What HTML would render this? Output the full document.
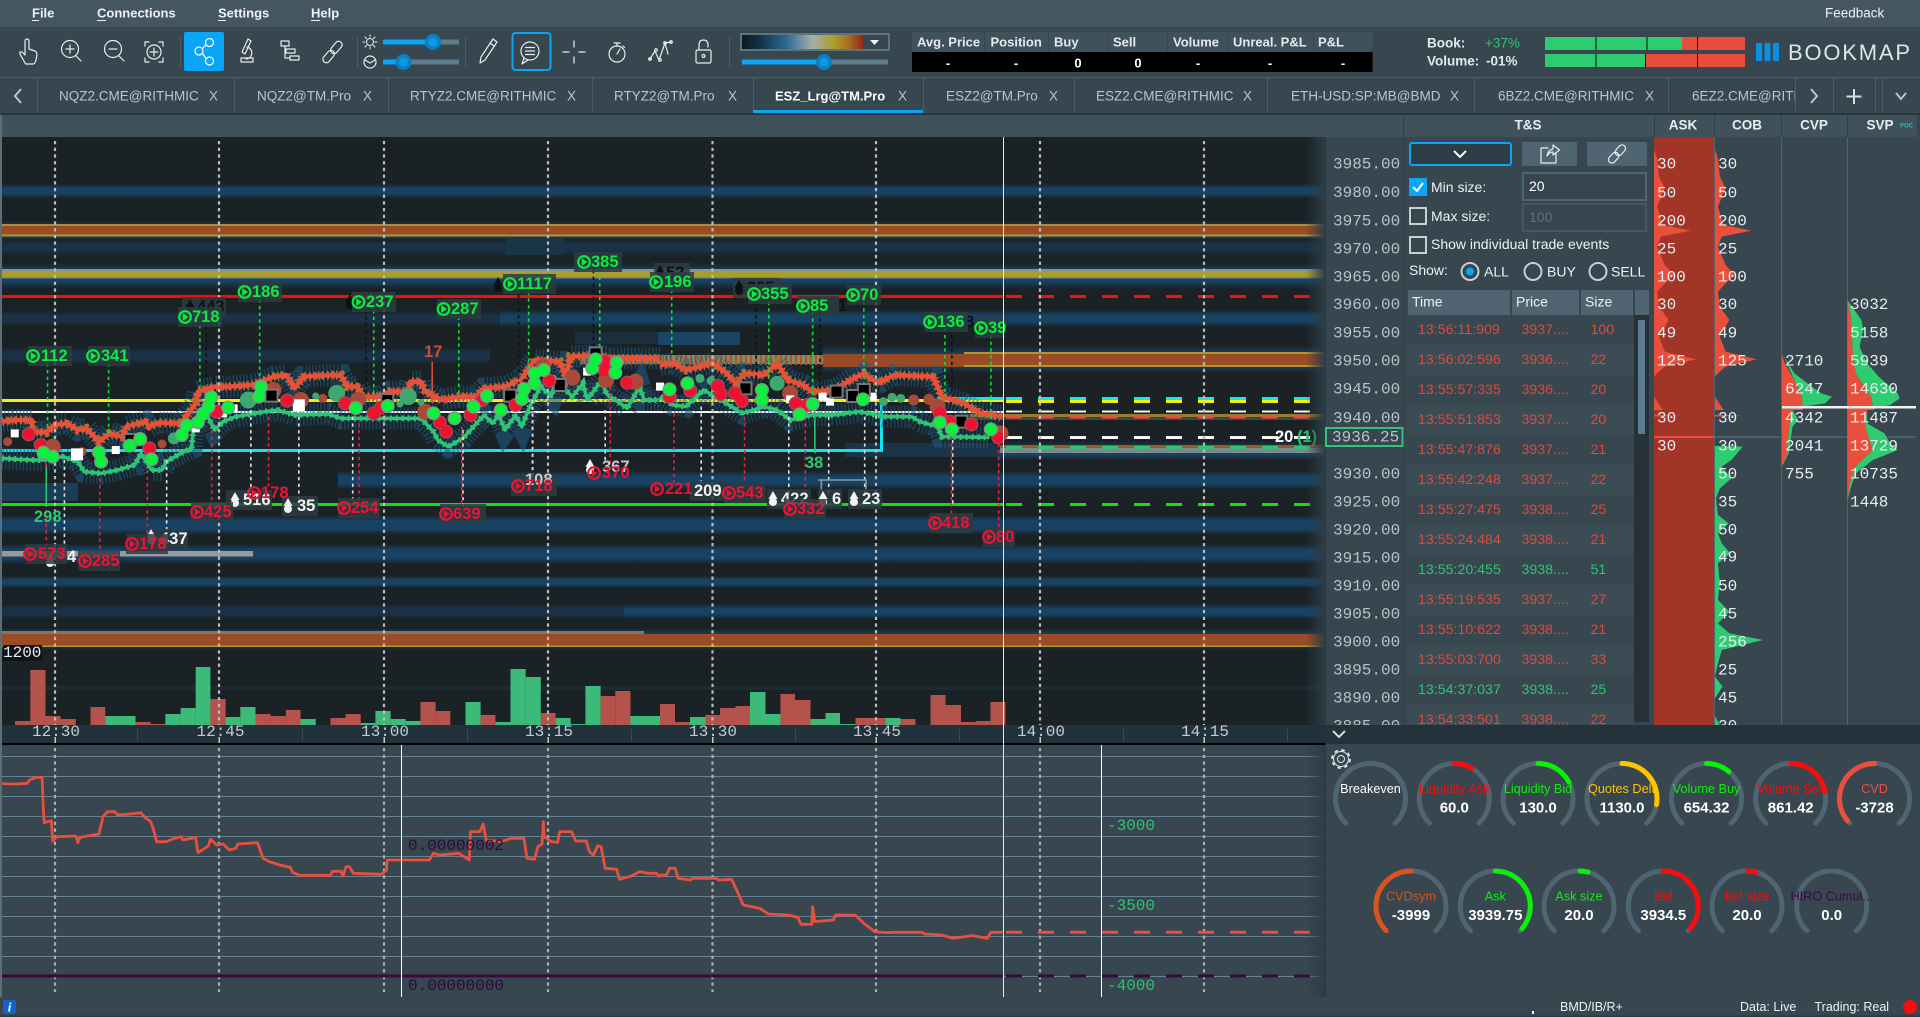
<!DOCTYPE html>
<html lang="en"><head><meta charset="utf-8"><title>Bookmap</title>
<style>
html,body{margin:0;padding:0;background:#37464f;width:1920px;height:1017px;overflow:hidden}
svg{display:block;font-family:"Liberation Sans",sans-serif}
text{dominant-baseline:central}
.m{font-family:"Liberation Mono",monospace;font-size:16px}
.ns{vector-effect:non-scaling-stroke;fill:none}
.ic{fill:none;stroke:#e8edf0;stroke-width:1.2;stroke-linecap:round;stroke-linejoin:round}
.mn{font-size:13px;font-weight:bold;fill:#eef2f4}
.tb{font-size:13.5px;fill:#b9c5cb}
.tx{font-size:14px;fill:#b9c5cb}
.th{font-size:13px;font-weight:bold;fill:#e4e9ec}
.tv{font-size:13px;font-weight:bold;fill:#fff;text-anchor:middle}
.hd{font-size:13.5px;font-weight:bold;fill:#e8edf0;text-anchor:middle}
.lb{font-size:14px;fill:#eef2f4}
.r{font-size:14.2px;fill:#df4a3c}
.g{font-size:14.2px;fill:#2fc476}
.p{fill:#b9c2c7}
.w{fill:#e8ecee}
.lg{font-size:16.5px;font-weight:bold;fill:#0bec3c}
.lr{font-size:16.5px;font-weight:bold;fill:#ee1336}
.lw{font-size:16.5px;font-weight:bold;fill:#f2f2f2}
.lk{font-size:16.5px;font-weight:bold;fill:#0d1114}
.bg{fill:#2b3c42;fill-opacity:.85}
.gt{fill:none;stroke:#4f6672;stroke-width:5;stroke-linecap:round}
.ga{fill:none;stroke-width:5;stroke-linecap:round}
.gl{font-size:12.7px;text-anchor:middle}
.gv{font-size:15px;font-weight:bold;fill:#fff;text-anchor:middle}
</style></head><body>
<svg xmlns="http://www.w3.org/2000/svg" width="1920" height="1017" viewBox="0 0 1920 1017">
<defs>
<linearGradient id="b" x1="0" y1="0" x2="0" y2="1"><stop offset="0" stop-color="#1a2226"/><stop offset=".3" stop-color="#184263"/><stop offset=".7" stop-color="#184263"/><stop offset="1" stop-color="#1a2226"/></linearGradient>
<linearGradient id="d" x1="0" y1="0" x2="0" y2="1"><stop offset="0" stop-color="#1a2226"/><stop offset=".3" stop-color="#1a3146"/><stop offset=".7" stop-color="#1a3146"/><stop offset="1" stop-color="#1a2226"/></linearGradient>
<linearGradient id="fade" x1="0" y1="0" x2="1" y2="0"><stop offset="0" stop-color="#2d3d46" stop-opacity="0"/><stop offset="1" stop-color="#2d3d46"/></linearGradient>
<linearGradient id="hm" x1="0" y1="0" x2="1" y2="0"><stop offset="0" stop-color="#0f1a22"/><stop offset=".15" stop-color="#14324a"/><stop offset=".36" stop-color="#276a90"/><stop offset=".58" stop-color="#a5adab"/><stop offset=".76" stop-color="#ab9f28"/><stop offset=".88" stop-color="#a7701f"/><stop offset="1" stop-color="#96281c"/></linearGradient>
<clipPath id="cc"><rect x="2" y="137" width="1323" height="588"/></clipPath>
<clipPath id="tabc"><rect x="1680" y="80" width="115" height="30"/></clipPath>
<clipPath id="psc"><rect x="1325" y="137" width="595" height="588"/></clipPath>
<g id="pl" fill="none" stroke="currentColor"><circle r="5.8" stroke-width="2.2"/><path d="M-1.800-3 2.600 0-1.800 3Z" fill="currentColor" stroke-width="1"/></g>
<g id="up" fill="currentColor"><path d="M0-8 4.500 0H-4.500Z"/><circle cy="3" r="4"/></g>
<path id="o6" class="ns" d="M5 545L30 540 75 540 78 575 110 578 130 555 160 550 185 570 205 565 235 605 260 580 290 590 300 560 345 545 355 560 375 548 430 550 465 490 470 455 510 440 540 440 600 435 650 410 680 405 700 445 720 410 790 405 810 405 825 440 850 440 860 470 900 470 925 455 970 455 975 425 1000 425 1010 455 1050 480 1090 470 1130 470 1150 445 1200 440 1240 415 1270 360 1330 365 1345 410 1355 350 1420 345 1450 355 1568 355"/>
<path id="b6" class="ns" d="M5 655L75 660 100 660 150 650 185 665 200 695 240 700 280 690 320 675 335 640 360 690 385 690 395 665 430 640 455 625 460 560 490 520 510 570 530 545 560 530 630 515 660 510 700 525 780 522 810 535 1000 535 1030 575 1040 600 1065 620 1100 595 1125 560 1150 525 1170 550 1185 525 1200 570 1225 525 1240 560 1260 495 1285 440 1310 470 1320 420 1360 470 1385 430 1395 480 1430 420 1440 460 1490 505 1520 440 1530 480 1568 480"/>
<path id="o7" class="ns" d="M0 375L30 370 60 390 120 370 150 395 175 430 195 400 240 405 270 370 295 420 330 435 350 455 400 450 440 420 470 400 490 420 510 425 540 405 630 410 650 470 700 490 740 520 790 530"/>
<path id="b7" class="ns" d="M0 470L30 495 60 500 100 450 140 480 190 520 240 500 270 510 300 540 350 525 400 525 460 515 520 530 580 530 600 545 640 560 650 590 760 592"/>
<path id="r6" class="ns" d="M68 583h.1M97 615h.1M355 625h.1M515 515h.1M682 482h.1M820 490h.1M888 520h.1M905 503h.1M1045 547h.1M1060 575h.1M1118 525h.1M1145 480h.1M1225 495h.1M1305 422h.1M1437 365h.1M1437 392h.1M1490 428h.1"/>
<path id="g6" class="ns" d="M103 638h.1M125 650h.1M235 637h.1M240 665h.1M308 617h.1M333 597h.1M360 658h.1M443 556h.1M432 585h.1M470 547h.1M482 522h.1M495 500h.1M502 472h.1M542 503h.1M615 470h.1M620 440h.1M845 504h.1M921 498h.1M1030 520h.1M1080 535h.1M1125 500h.1M1157 468h.1M1190 510h.1M1240 477h.1M1245 447h.1M1270 430h.1M1270 400h.1M1292 390h.1M1415 358h.1M1407 385h.1M1465 368h.1M1462 398h.1"/>
<path id="r7" class="ns" d="M22 470h.1M70 452h.1M133 438h.1M140 462h.1M173 460h.1M189 483h.1M313 490h.1M340 495h.1M645 518h.1M668 545h.1M718 553h.1M780 592h.1"/>
<path id="g7" class="ns" d="M22 448h.1M63 430h.1M235 450h.1M235 480h.1M322 523h.1M352 492h.1M468 478h.1M645 547h.1M673 568h.1M763 568h.1"/>
</defs>

<!-- chrome -->
<rect width="1920" height="27" fill="#44565f"/>
<rect y="27" width="1920" height="50" fill="#37464f"/>
<rect y="77" width="1920" height="1" fill="#4a5c66"/>
<rect y="78" width="1920" height="36" fill="#37474f"/>
<rect y="113" width="1920" height="2" fill="#28363e"/>

<text class="mn" x="32" y="13">File</text><rect x="32" y="20" width="7" height="1" fill="#eef2f4"/>
<text class="mn" x="97" y="13">Connections</text><rect x="97" y="20" width="9" height="1" fill="#eef2f4"/>
<text class="mn" x="218" y="13">Settings</text><rect x="218" y="20" width="8" height="1" fill="#eef2f4"/>
<text class="mn" x="311" y="13">Help</text><rect x="311" y="20" width="9" height="1" fill="#eef2f4"/>
<text class="mn" x="1825" y="13" style="font-weight:normal;font-size:13.5px">Feedback</text>

<!-- toolbar -->
<g fill="#4a5c66"><rect x="180" y="37" width="1" height="31"/><rect x="357" y="37" width="1" height="31"/><rect x="465" y="37" width="1" height="31"/><rect x="729" y="37" width="1" height="31"/></g>
<rect x="184" y="32" width="40" height="39" rx="2" fill="#0aa6f5"/>
<rect x="512.500" y="33" width="38" height="37" rx="3" fill="none" stroke="#0aa6f5" stroke-width="2"/>
<g class="ic">
<path d="M25 63 20 54Q19 51 22 52L25 55V42Q25 39 27 39 29 39 29 42V49L35 51Q37 52 37 55L36 60Q35 64 33 64H26Z"/>
<circle cx="70" cy="49" r="8.500"/><path d="M76 56 81 61M66 49H74M70 45V53"/>
<circle cx="113" cy="49" r="8.500"/><path d="M119 56 124 61M109 49H117"/>
<circle cx="154" cy="52" r="7"/><path d="M150 52H158M154 48V56M149 42H145V46M159 42H163V46M149 62H145V58M159 62H163V58"/>
<path d="M248 39l3 2-6 13-3-2zM247 47c4 1 6 5 4 9-1 2-3 3-5 3M241 58h12v4h-12z"/>
<path d="M281 41h8v5h-8zM286 49h9v4h-9zM290 56h9v4h-9zM285 46v5h1M285 51v7h5"/>
<g transform="translate(332.500 52) rotate(40)"><rect x="-3.500" y="-13" width="7" height="14" rx="3.500"/><rect x="-3.500" y="-1" width="7" height="14" rx="3.500"/></g>
<circle cx="370" cy="42" r="3.500" stroke-width="1"/><path stroke-width="1" d="M370 35v2M370 47v2M363 42h2M375 42h2M365 37l1.500 1.500M375 37l-1.500 1.500M365 47l1.500-1.500M375 47l-1.500-1.500"/>
<circle cx="370" cy="62" r="6" stroke-width="1.200"/><path stroke-width="1.200" d="M365 60 370 63 375 60"/>
<path d="M493 39l4 3-12 18-5 3 1-6zM490 43l4 3"/>
<circle cx="530" cy="51" r="9"/><path d="M524 58 522 64 528 60M525.500 47.500H534.500M525.500 51H534.500M525.500 54.500H534.500"/>
<path d="M563 52h6M579 52h6M574 41v6M574 57v6"/>
<circle cx="617" cy="54" r="8"/><path d="M614 43h6M617 43v3M617 54 620 49M623 46l1.500 1.500"/>
<path d="M650 59 655 51 659 60 665 43 671 42M665 43 668 54"/>
<circle cx="650" cy="59" r="1.300"/><circle cx="656" cy="50" r="1.300"/><circle cx="660" cy="60" r="1.300"/><circle cx="665" cy="43" r="1.300"/><circle cx="671" cy="42" r="1.300"/>
<rect x="696" y="50" width="15" height="13" rx="1.500"/><path d="M699 50V45Q699 40 703.500 40 708 40 708 45V47"/><circle cx="703.500" cy="56" r="1.500"/>
</g>
<g fill="none" stroke="#fff" stroke-width="1.200" stroke-linecap="round">
<circle cx="199" cy="51" r="4"/><circle cx="209.500" cy="42.500" r="4"/><circle cx="209.500" cy="61" r="4"/><path d="M202.500 48.500 206 45M202.500 53.500 206 58.500"/>
</g>
<rect x="383" y="39.500" width="76" height="5" fill="#5d7c8c"/><rect x="383" y="39.500" width="50" height="5" fill="#0aa6f5"/><circle cx="433" cy="42" r="8" fill="#0b7fc0"/><circle cx="433" cy="42" r="4.500" fill="#0a9ae8"/>
<rect x="383" y="59.500" width="76" height="5" fill="#5d7c8c"/><rect x="383" y="59.500" width="21" height="5" fill="#0aa6f5"/><circle cx="403.500" cy="62" r="8" fill="#0b7fc0"/><circle cx="403.500" cy="62" r="4.500" fill="#0a9ae8"/>
<rect x="741" y="34" width="148" height="16" fill="#37464f" stroke="#5d7480" stroke-width="2"/>
<rect x="742" y="35" width="121" height="14" fill="url(#hm)"/>
<path d="M870 40h9l-4.500 5z" fill="#eef2f4"/>
<rect x="742" y="59.500" width="146" height="5" fill="#5d7c8c"/><rect x="742" y="59.500" width="82" height="5" fill="#0aa6f5"/><circle cx="824" cy="62" r="8" fill="#0b7fc0"/><circle cx="824" cy="62" r="4.500" fill="#0a9ae8"/>

<g fill="#3f515b"><rect x="912" y="32" width="72" height="20"/><rect x="985" y="32" width="63" height="20"/><rect x="1049" y="32" width="58" height="20"/><rect x="1108" y="32" width="59" height="20"/><rect x="1168" y="32" width="60" height="20"/><rect x="1229" y="32" width="84" height="20"/><rect x="1314" y="32" width="58.500" height="20"/></g>
<rect x="912" y="52" width="460.500" height="20" fill="#000"/>
<text class="th" x="917" y="42">Avg. Price</text><text class="th" x="990.500" y="42">Position</text><text class="th" x="1054" y="42">Buy</text><text class="th" x="1113" y="42">Sell</text><text class="th" x="1173" y="42">Volume</text><text class="th" x="1233" y="42">Unreal. P&amp;L</text><text class="th" x="1318" y="42">P&amp;L</text>
<text class="tv" x="948" y="63">-</text><text class="tv" x="1016" y="63">-</text><text class="tv" x="1078" y="63">0</text><text class="tv" x="1138" y="63">0</text><text class="tv" x="1198" y="63">-</text><text class="tv" x="1270" y="63">-</text><text class="tv" x="1343" y="63">-</text>

<text class="th" x="1427" y="43" style="font-size:13.5px">Book:</text><text x="1485" y="43" font-size="13.500" fill="#2fc476">+37%</text>
<text class="th" x="1427" y="61" style="font-size:13.5px">Volume:</text><text class="th" x="1486" y="61" style="font-size:13.5px">-01%</text>
<rect x="1545" y="37" width="200" height="13" fill="#e74c3c"/><rect x="1545" y="37" width="137" height="13" fill="#2ecc71"/>
<rect x="1545" y="54" width="200" height="13" fill="#e74c3c"/><rect x="1545" y="54" width="100" height="13" fill="#2ecc71"/>
<g fill="#0a0a0a"><rect x="1595.500" y="37" width="1" height="13"/><rect x="1646.500" y="37" width="1" height="13"/><rect x="1697" y="37" width="1" height="13"/><rect x="1595.500" y="54" width="1" height="13"/><rect x="1645" y="54" width="1" height="13"/><rect x="1697" y="54" width="1" height="13"/></g>
<g fill="#0b8fe2"><rect x="1756" y="43" width="6" height="18"/><rect x="1764.500" y="43" width="6" height="18"/><rect x="1773" y="43" width="6" height="18"/></g>
<text x="1788" y="52.500" font-size="22" letter-spacing="1.800" fill="#dfe5e8">BOOKMAP</text>

<!-- tabs -->
<g fill="#4a5c66"><rect x="37" y="78" width="1" height="35"/><rect x="234" y="78" width="1" height="35"/><rect x="388" y="78" width="1" height="35"/><rect x="592" y="78" width="1" height="35"/><rect x="753" y="78" width="1" height="35"/><rect x="923" y="78" width="1" height="35"/><rect x="1074" y="78" width="1" height="35"/><rect x="1267" y="78" width="1" height="35"/><rect x="1474" y="78" width="1" height="35"/><rect x="1668" y="78" width="1" height="35"/><rect x="1795" y="78" width="1" height="35"/><rect x="1833" y="78" width="1" height="35"/><rect x="1875" y="78" width="1" height="35"/><rect x="1882" y="78" width="1" height="35"/></g>
<rect x="753" y="110" width="170" height="3" fill="#0aa6f5"/>
<text class="tb" x="59" y="96">NQZ2.CME@RITHMIC</text><text class="tb" x="209" y="96">X</text>
<text class="tb" x="257" y="96">NQZ2@TM.Pro</text><text class="tb" x="363" y="96">X</text>
<text class="tb" x="410" y="96">RTYZ2.CME@RITHMIC</text><text class="tb" x="567" y="96">X</text>
<text class="tb" x="614" y="96">RTYZ2@TM.Pro</text><text class="tb" x="728" y="96">X</text>
<text class="tb" x="775" y="96" style="fill:#fff;font-weight:bold;font-size:13px">ESZ_Lrg@TM.Pro</text><text class="tb" x="898" y="96">X</text>
<text class="tb" x="946" y="96">ESZ2@TM.Pro</text><text class="tb" x="1049" y="96">X</text>
<text class="tb" x="1096" y="96">ESZ2.CME@RITHMIC</text><text class="tb" x="1243" y="96">X</text>
<text class="tb" x="1291" y="96">ETH-USD:SP:MB@BMD</text><text class="tb" x="1450" y="96">X</text>
<text class="tb" x="1498" y="96">6BZ2.CME@RITHMIC</text><text class="tb" x="1645" y="96">X</text>
<g clip-path="url(#tabc)"><text class="tb" x="1692" y="96">6EZ2.CME@RITHMIC</text></g>
<g fill="none" stroke="#b9c5cb" stroke-width="2"><path d="M21 89 15 96 21 103"/><path d="M1811 89 1817 96 1811 103"/><path d="M1854 89V104M1846.500 96.500H1861.500" stroke="#d5dde1"/><path d="M1896 93 1901 99 1906 93"/></g>

<!-- panel header -->
<rect x="2" y="115" width="1915" height="22" fill="#3f515b"/>
<rect y="115" width="2" height="902" fill="#5a6f7a"/>
<g fill="#2f3f48"><rect x="1403" y="115" width="1" height="22"/><rect x="1654" y="115" width="1" height="22"/><rect x="1714" y="115" width="1" height="22"/><rect x="1781" y="115" width="1" height="22"/><rect x="1847" y="115" width="1" height="22"/></g>
<text class="hd" x="1528" y="125">T&amp;S</text><text class="hd" x="1683" y="125">ASK</text><text class="hd" x="1747" y="125">COB</text><text class="hd" x="1814" y="125">CVP</text><text class="hd" x="1880" y="125">SVP</text><text x="1900" y="126.500" font-size="6" font-weight="bold" fill="#12c6c6">POC</text>

<!-- heatmap -->
<g clip-path="url(#cc)">
<rect x="2" y="137" width="1323" height="588" fill="#1a2226"/>
<rect x="2" y="184" width="1323" height="14" fill="url(#b)"/>
<rect x="2" y="221" width="1323" height="20" fill="url(#b)"/>
<rect x="2" y="239" width="1323" height="17" fill="url(#d)"/>
<rect x="506" y="237" width="58" height="18" fill="#1a3448"/>
<rect x="2" y="263" width="1323" height="26" fill="url(#b)"/>
<rect x="2" y="224" width="1323" height="2" fill="#a09040"/><rect x="2" y="226" width="1323" height="8.500" fill="#9b4b25"/><rect x="2" y="234.500" width="1323" height="2" fill="#a89a30"/>
<rect x="2" y="269" width="1323" height="2.500" fill="#8d9290"/><rect x="2" y="271.500" width="1323" height="5.500" fill="#a99d30"/><rect x="2" y="277" width="1323" height="1.500" fill="#74878c"/>
<rect x="2" y="311" width="500" height="15" fill="url(#d)"/><rect x="500" y="310" width="825" height="17" fill="url(#b)"/>
<rect x="575" y="332" width="83" height="12" fill="#1a2e3e"/><rect x="658" y="332" width="82" height="13" fill="#1a4564"/>
<rect x="2" y="347" width="488" height="17" fill="url(#d)"/>
<rect x="823" y="346" width="502" height="27" fill="url(#b)"/>
<rect x="580" y="355" width="243" height="9" fill="#8b8868"/>
<path d="M580 360H823" stroke="#a8562a" stroke-width="10" stroke-dasharray="2 3" fill="none"/>
<rect x="823" y="354" width="141" height="13" fill="#9a4b25"/>
<rect x="964" y="352" width="361" height="2" fill="#a89a30"/><rect x="964" y="354" width="361" height="11" fill="#9b4b25"/><rect x="964" y="365" width="361" height="2" fill="#a89a30"/>
<rect x="845" y="443" width="155" height="14" fill="#1b3448"/>
<rect x="1000" y="442" width="325" height="18" fill="url(#b)"/><rect x="1000" y="445" width="325" height="3" fill="#9b5a25"/><rect x="1000" y="448" width="325" height="5" fill="#7b8a8c"/>
<rect x="970" y="414" width="355" height="3" fill="#9c7a2a"/><rect x="970" y="417" width="355" height="3" fill="#3a4a40"/>
<rect x="338" y="471" width="987" height="18" fill="url(#b)"/>
<rect x="2" y="483" width="76" height="18" fill="#1b3e58"/>
<rect x="2" y="515" width="1323" height="20" fill="url(#b)"/>
<rect x="2" y="544" width="1323" height="20" fill="url(#b)"/>
<rect x="2" y="551" width="251" height="5.500" fill="#9a9a9a"/>
<rect x="2" y="576" width="1323" height="12" fill="url(#b)"/>
<rect x="2" y="604" width="622" height="15" fill="url(#d)"/><rect x="624" y="604" width="701" height="15" fill="url(#b)"/>
<rect x="2" y="628" width="1323" height="22" fill="url(#b)"/>
<rect x="2" y="631" width="642" height="4" fill="#7b7a70"/><rect x="2" y="634" width="1323" height="12" fill="#9b4b25"/><rect x="2" y="645.500" width="1323" height="1.500" fill="#a89a30"/>
<rect x="2" y="650" width="1323" height="75" fill="#1a2226"/>
<rect x="2" y="686" width="1323" height="4" fill="#1b2c35"/>
<rect x="3" y="645" width="39" height="16" fill="#0f1418"/>

<!-- bars -->
<g fill="#b4524c"><rect x="15" y="721" width="15.300" height="4"/><rect x="30.300" y="670" width="15.200" height="55"/><rect x="45.500" y="716" width="15.100" height="9"/><rect x="60.600" y="719" width="15.200" height="6"/><rect x="90.500" y="707" width="14.700" height="18"/><rect x="135.500" y="722" width="15.200" height="3"/><rect x="150.700" y="724" width="14.700" height="1"/><rect x="210.400" y="699" width="15.200" height="26"/><rect x="255.500" y="714" width="15.100" height="11"/><rect x="270.600" y="716" width="15.200" height="9"/><rect x="285.800" y="710" width="14.700" height="15"/><rect x="330.400" y="718" width="15.100" height="7"/><rect x="345.500" y="714" width="15.200" height="11"/><rect x="420.500" y="702" width="15.100" height="23"/><rect x="435.600" y="711" width="14.700" height="14"/><rect x="480.600" y="715" width="14.800" height="10"/><rect x="540.800" y="713" width="14.800" height="12"/><rect x="600.600" y="696" width="14.700" height="29"/><rect x="615.300" y="691" width="15.200" height="34"/>
<rect x="660" y="704" width="15" height="21"/><rect x="675" y="722" width="15" height="3"/><rect x="705.500" y="715" width="14.500" height="10"/><rect x="720" y="708" width="15.500" height="17"/><rect x="735.500" y="706" width="14.500" height="19"/><rect x="780.500" y="694" width="14.500" height="31"/><rect x="795" y="700" width="15.500" height="25"/><rect x="855.500" y="718" width="30" height="7"/><rect x="900.500" y="719" width="15" height="6"/><rect x="930.500" y="695" width="15" height="30"/><rect x="945.500" y="705" width="15.500" height="20"/><rect x="961" y="722" width="14.700" height="3"/><rect x="975.700" y="721" width="14.800" height="4"/><rect x="990.500" y="702" width="15" height="23"/></g>
<g fill="#3cba7a"><rect x="105.200" y="716" width="30.300" height="9"/><rect x="165.400" y="714" width="15.200" height="11"/><rect x="180.600" y="708" width="15.100" height="17"/><rect x="195.700" y="667" width="14.700" height="58"/><rect x="225.600" y="717" width="14.700" height="8"/><rect x="240.300" y="707" width="15.200" height="18"/><rect x="300.500" y="719" width="15.200" height="6"/><rect x="360.700" y="723" width="14.700" height="2"/><rect x="375.400" y="711" width="15.200" height="14"/><rect x="390.600" y="719" width="15.100" height="6"/><rect x="405.700" y="721" width="14.800" height="4"/><rect x="465.500" y="702" width="15.100" height="23"/><rect x="495.400" y="722" width="15.100" height="3"/><rect x="510.500" y="669" width="15.200" height="56"/><rect x="525.700" y="677" width="15.100" height="48"/><rect x="555.600" y="718" width="15.100" height="7"/><rect x="570.700" y="724" width="14.700" height="1"/><rect x="585.400" y="686" width="15.200" height="39"/><rect x="630.500" y="716" width="29.500" height="9"/>
<rect x="690" y="717" width="15.500" height="8"/><rect x="750" y="692" width="15.500" height="33"/><rect x="765.500" y="714" width="15" height="11"/><rect x="810.500" y="719" width="15" height="6"/><rect x="825.500" y="713" width="14.500" height="12"/><rect x="840" y="724" width="15.500" height="1"/><rect x="885.500" y="718" width="15" height="7"/></g>

<!-- price levels -->
<rect x="2" y="295" width="1001" height="3" fill="#f80c0c"/>
<rect x="2" y="399" width="1001" height="3" fill="#f5ef10"/>
<rect x="2" y="411" width="1001" height="2" fill="#f4f4f4"/>
<rect x="2" y="449" width="880" height="3" fill="#12e5ef"/><rect x="880" y="405" width="3" height="47" fill="#12e5ef"/><rect x="937" y="397" width="66" height="3" fill="#12e5ef"/>
<rect x="2" y="503" width="1001" height="3" fill="#0be30b"/>
<g fill="none" stroke-dasharray="16 16">
<path d="M1006 296.500H1310" stroke="#f80c0c" stroke-width="3"/>
<path d="M1006 398.500H1310" stroke="#12e5ef" stroke-width="3"/>
<path d="M1006 401.500H1310" stroke="#f5ef10" stroke-width="3"/>
<path d="M1006 411.500H1310" stroke="#f4f4f4" stroke-width="2"/>
<path d="M1006 417H1310" stroke="#e8503a" stroke-width="3"/>
<path d="M1006 437.500H1310" stroke="#f4f4f4" stroke-width="3"/>
<path d="M1006 447.500H1310" stroke="#2fc476" stroke-width="3"/>
<path d="M1006 504.500H1310" stroke="#0be30b" stroke-width="3"/>
</g>

<!-- price action -->
<g transform="translate(0 240) scale(.42088 .33333)" fill="none">
<g stroke="#1f5a80" stroke-width="22" stroke-dasharray="1.500 2" opacity=".6"><use href="#o6"/><use href="#b6"/></g>
<g stroke="#a07a30" stroke-width="9" stroke-dasharray="1.500 3"><use href="#o6"/></g>
<g stroke="#e8503a" stroke-width="4.500" stroke-linejoin="round"><use href="#o6"/></g>
<g stroke="#e8503a" stroke-width="7" stroke-dasharray="2 4"><use href="#o6"/></g>
<g stroke="#2fc476" stroke-width="3.500" stroke-linejoin="round"><use href="#b6"/></g>
<g stroke="#2fc476" stroke-width="6" stroke-dasharray="2 4"><use href="#b6"/></g>
</g>
<g transform="translate(660 240) scale(.43367 .33333)" fill="none">
<g stroke="#1f5a80" stroke-width="22" stroke-dasharray="1.500 2" opacity=".6"><use href="#o7"/><use href="#b7"/></g>
<g stroke="#a07a30" stroke-width="9" stroke-dasharray="1.500 3"><use href="#o7"/></g>
<g stroke="#e8503a" stroke-width="4.500" stroke-linejoin="round"><use href="#o7"/></g>
<g stroke="#e8503a" stroke-width="7" stroke-dasharray="2 4"><use href="#o7"/></g>
<g stroke="#2fc476" stroke-width="3.500" stroke-linejoin="round"><use href="#b7"/></g>
<g stroke="#2fc476" stroke-width="6" stroke-dasharray="2 4"><use href="#b7"/></g>
</g>

<!-- vertical grid dashes -->
<g stroke="#b9bcbe" stroke-width="2.200" stroke-dasharray="3.300 3.400" fill="none"><path d="M55 141V725M219 141V725M384 141V725M548 141V725M712.500 141V725M876 141V725M1040 141V725M1204 141V725"/></g>

<!-- dotted connectors -->
<g transform="translate(0 240) scale(.42088 .33333)" stroke-width="1.600" stroke-dasharray="3.300 3.400">
<path class="ns" stroke="#0be33c" d="M113 370V560M258 370V590M475 255V445M617 178V410M888 210V460M1090 230V470M1256 155V385M1425 90V340"/>
<path class="ns" stroke="#0d1114" d="M490 240V440M1232 165V430M870 210V460M1410 90V340"/>
<path class="ns" stroke="#ee2040" d="M110 670V920M237 715V930M350 690V890M503 570V795M638 530V740M853 550V780M1097 560V800M1267 500V715M1450 440V680"/>
<path class="ns" stroke="#e0e0e0" d="M153 660V930M396 660V880M596 510V750M710 530V780M838 530V780M1100 570V800M1265 480V710M1438 510V670"/>
<path class="ns" stroke="#2fc476" stroke-dasharray="none" d="M110 680V800"/>
<path class="ns" stroke="#d4503a" stroke-dasharray="none" d="M1027 365V490"/>
</g>
<g transform="translate(660 240) scale(.43367 .33333)" stroke-width="1.600" stroke-dasharray="3.300 3.400">
<path class="ns" stroke="#0be33c" d="M27 150V340M251 185V420M352 215V470M470 185V470M657 265V470M763 285V550"/>
<path class="ns" stroke="#0d1114" d="M222 185V420M369 215V470M673 265V470"/>
<path class="ns" stroke="#ee2040" d="M32 520V730M195 530V740M335 530V790M672 590V820M781 610V870"/>
<path class="ns" stroke="#e0e0e0" d="M95 500V730M297 530V770M389 530V760M472 530V760M675 600V800"/>
<path class="ns" stroke="#2fc476" stroke-dasharray="none" d="M357 510V640"/>
<path class="ns" stroke="#8a989e" stroke-dasharray="none" d="M365 720H475V750M372 720V755"/>
</g>

<!-- markers -->
<g transform="translate(0 240) scale(.42088 .33333)" stroke-linecap="round" fill="none">
<path class="ns" stroke="#a84a38" stroke-width="16" d="M125 620h.1M650 450h.1M715 480h.1M850 480h.1M1010 515h.1M1360 413h.1M1510 425h.1M1290 380h.1M1440 420h.1"/>
<path class="ns" stroke="#a84a38" stroke-width="9" d="M18 605h.1M195 635h.1M385 612h.1M767 475h.1"/>
<path class="ns" stroke="#3fa870" stroke-width="17" d="M590 480h.1M800 460h.1M970 470h.1"/>
<path class="ns" stroke="#3fa870" stroke-width="12" d="M413 595h.1"/>
<path class="ns" stroke="#3fa870" stroke-width="7" d="M1000 487h.1M750 468h.1M950 492h.1"/>
<path class="ns" stroke="#fff" stroke-width="12" stroke-linecap="square" d="M183 643h.1M710 496h.1"/>
<path class="ns" stroke="#fff" stroke-width="8" stroke-linecap="square" d="M530 520h.1M465 565h.1M555 505h.1M1395 395h.1M1450 395h.1M35 580h.1M275 630h.1"/>
<path class="ns" stroke="#777" stroke-width="14" stroke-linecap="square" d="M645 467h.1M920 480h.1M1330 435h.1M1212 467h.1M1415 340h.1M310 600h.1"/>
<path class="ns" stroke="#000" stroke-width="10" stroke-linecap="square" d="M645 467h.1M920 480h.1M1330 435h.1M1212 467h.1M1415 340h.1M310 600h.1"/>
<g stroke="#a05050" stroke-width="14"><use href="#r6"/></g><g stroke="#f01030" stroke-width="11.500"><use href="#r6"/></g>
<g stroke="#8a8f8a" stroke-width="14"><use href="#g6"/></g><g stroke="#0cf03e" stroke-width="11.500"><use href="#g6"/></g>
</g>
<g transform="translate(660 240) scale(.43367 .33333)" stroke-linecap="round" fill="none">
<path class="ns" stroke="#a84a38" stroke-width="16" d="M300 460h.1M640 500h.1M785 580h.1"/>
<path class="ns" stroke="#a84a38" stroke-width="11" d="M345 490h.1M585 480h.1M620 478h.1"/>
<path class="ns" stroke="#3fa870" stroke-width="15" d="M270 430h.1"/>
<path class="ns" stroke="#3fa870" stroke-width="9" d="M92 415h.1M118 422h.1M515 485h.1M535 472h.1M555 475h.1"/>
<path class="ns" stroke="#fff" stroke-width="8" stroke-linecap="square" d="M300 478h.1M392 485h.1M375 470h.1M0 440h.1M490 470h.1"/>
<path class="ns" stroke="#777" stroke-width="14" stroke-linecap="square" d="M197 445h.1M407 455h.1M445 468h.1M695 545h.1M470 450h.1"/>
<path class="ns" stroke="#000" stroke-width="10" stroke-linecap="square" d="M197 445h.1M407 455h.1M445 468h.1M695 545h.1M470 450h.1"/>
<g stroke="#a05050" stroke-width="14"><use href="#r7"/></g><g stroke="#f01030" stroke-width="11.500"><use href="#r7"/></g>
<g stroke="#8a8f8a" stroke-width="14"><use href="#g7"/></g><g stroke="#0cf03e" stroke-width="11.500"><use href="#g7"/></g>
</g>

<!-- labels -->
<g>
<rect class="bg" x="182" y="297" width="44" height="20"/><use href="#up" x="190" y="307" color="#0d1114"/><text class="lk" x="197" y="307">443</text>
<rect class="bg" x="654" y="263" width="36" height="20"/><use href="#up" x="660" y="273" color="#0d1114"/><text class="lk" x="666" y="273">52</text>
<rect class="bg" x="733" y="278" width="48" height="20"/><use href="#up" x="739" y="288" color="#0d1114"/><text class="lk" x="747" y="288">305</text>
<use href="#up" x="498" y="285" color="#0d1114"/><use href="#up" x="350" y="302" color="#0d1114"/>
<text class="lk" x="838" y="306">1</text><text class="lk" x="965" y="322">8</text>

<rect class="bg" x="28" y="346" width="44" height="20"/><use href="#pl" x="33" y="356" color="#0bec3c"/><text class="lg" x="41" y="356">112</text>
<rect class="bg" x="88" y="346" width="42" height="20"/><use href="#pl" x="93" y="356" color="#0bec3c"/><text class="lg" x="101" y="356">341</text>
<rect class="bg" x="178" y="307" width="44" height="20"/><use href="#pl" x="185" y="317" color="#0bec3c"/><text class="lg" x="192" y="317">718</text>
<rect class="bg" x="238" y="282" width="44" height="20"/><use href="#pl" x="244.500" y="292" color="#0bec3c"/><text class="lg" x="252" y="292">186</text>
<rect class="bg" x="352" y="292" width="44" height="20"/><use href="#pl" x="358.500" y="302" color="#0bec3c"/><text class="lg" x="366" y="302">237</text>
<rect class="bg" x="437" y="299" width="44" height="20"/><use href="#pl" x="443.500" y="309" color="#0bec3c"/><text class="lg" x="451" y="309">287</text>
<rect class="bg" x="503" y="274" width="53" height="20"/><use href="#pl" x="510" y="284" color="#0bec3c"/><text class="lg" x="517" y="284">1117</text>
<rect class="bg" x="574" y="252" width="48" height="20"/><use href="#pl" x="584" y="262" color="#0bec3c"/><text class="lg" x="591" y="262">385</text>
<rect class="bg" x="650" y="272" width="44" height="20"/><use href="#pl" x="656" y="282" color="#0bec3c"/><text class="lg" x="664" y="282">196</text>
<rect class="bg" x="748" y="284" width="44" height="20"/><use href="#pl" x="754" y="294" color="#0bec3c"/><text class="lg" x="761" y="294">355</text>
<rect class="bg" x="797" y="296" width="42" height="20"/><use href="#pl" x="803" y="306" color="#0bec3c"/><text class="lg" x="810" y="306">85</text>
<rect class="bg" x="847" y="285" width="34" height="20"/><use href="#pl" x="853" y="295" color="#0bec3c"/><text class="lg" x="860" y="295">70</text>
<rect class="bg" x="924" y="312" width="44" height="20"/><use href="#pl" x="930" y="322" color="#0bec3c"/><text class="lg" x="937" y="322">136</text>
<rect class="bg" x="975" y="318" width="30" height="20"/><use href="#pl" x="981" y="328" color="#0bec3c"/><text class="lg" x="988" y="328">39</text>

<rect class="bg" x="226" y="490" width="46" height="20"/><use href="#up" x="235" y="500" color="#f2f2f2"/><text class="lw" x="243" y="500">516</text>
<rect class="bg" x="148" y="529" width="40" height="20"/><use href="#up" x="151" y="537" color="#f2f2f2"/><text class="lw" x="160" y="539">437</text>
<rect class="bg" x="282" y="496" width="36" height="20"/><use href="#up" x="288" y="506" color="#f2f2f2"/><text class="lw" x="297" y="506">35</text>
<text class="lw" x="67" y="557">4</text><use href="#up" x="50" y="560" color="#f2f2f2"/>
<rect class="bg" x="690" y="481" width="36" height="20"/><text class="lw" x="694" y="491">209</text>
<rect class="bg" x="767" y="489" width="44" height="20"/><use href="#up" x="773" y="499" color="#f2f2f2"/><text class="lw" x="781" y="499">422</text>
<rect class="bg" x="818" y="489" width="24" height="20"/><use href="#up" x="823" y="499" color="#f2f2f2"/><text class="lw" x="832" y="499">6</text>
<rect class="bg" x="848" y="489" width="34" height="20"/><use href="#up" x="854" y="499" color="#f2f2f2"/><text class="lw" x="862" y="499">23</text>
<rect class="bg" x="511" y="474" width="46" height="22"/><text class="lw" x="525" y="480" style="fill:#c8c8c8">108</text><text class="lw" x="602" y="467" style="fill:#c8c8c8">367</text><use href="#up" x="590" y="467" color="#f2f2f2"/>

<rect class="bg" x="25" y="544" width="42" height="20"/><use href="#pl" x="30" y="554" color="#ee1336"/><text class="lr" x="38" y="554">573</text>
<rect class="bg" x="78" y="551" width="42" height="20"/><use href="#pl" x="85" y="561" color="#ee1336"/><text class="lr" x="92" y="561">285</text>
<rect class="bg" x="126" y="534" width="42" height="20"/><use href="#pl" x="132" y="544" color="#ee1336"/><text class="lr" x="139" y="544">178</text>
<rect class="bg" x="191" y="502" width="42" height="20"/><use href="#pl" x="197" y="512" color="#ee1336"/><text class="lr" x="204" y="512">425</text>
<use href="#pl" x="254" y="493" color="#ee1336"/><text class="lr" x="261" y="493">178</text>
<rect class="bg" x="338" y="498" width="42" height="20"/><use href="#pl" x="344" y="508" color="#ee1336"/><text class="lr" x="351" y="508">254</text>
<rect class="bg" x="440" y="504" width="46" height="20"/><use href="#pl" x="446" y="514" color="#ee1336"/><text class="lr" x="453" y="514">639</text>
<use href="#pl" x="518" y="486" color="#ee1336"/><text class="lr" x="525" y="486">718</text>
<use href="#pl" x="594" y="473" color="#ee1336"/><text class="lr" x="602" y="473">370</text>
<use href="#pl" x="657" y="489" color="#ee1336"/><text class="lr" x="665" y="489">221</text>
<rect class="bg" x="724" y="483" width="42" height="20"/><use href="#pl" x="729" y="493" color="#ee1336"/><text class="lr" x="736" y="493">543</text>
<rect class="bg" x="784" y="499" width="42" height="20"/><use href="#pl" x="790" y="509" color="#ee1336"/><text class="lr" x="797" y="509">332</text>
<rect class="bg" x="929" y="513" width="44" height="20"/><use href="#pl" x="935" y="523" color="#ee1336"/><text class="lr" x="942" y="523">418</text>
<rect class="bg" x="983" y="527" width="32" height="20"/><use href="#pl" x="989" y="537" color="#ee1336"/><text class="lr" x="996" y="537">80</text>

<text x="424" y="352" font-size="16.500" font-weight="bold" fill="#d44a3a">17</text>
<text x="34" y="517" font-size="16.500" font-weight="bold" fill="#2fc476">298</text>
<text x="805" y="463" font-size="16.500" font-weight="bold" fill="#2fc476">38</text>
<text x="1275" y="437" font-size="16.500" font-weight="bold" fill="#fff">20</text><text x="1297" y="437" font-size="16.500" font-weight="bold" fill="#2fc476">(1)</text>
</g>
<text class="m w" x="3" y="653">1200</text>
</g>

<rect x="1306" y="137" width="19" height="606" fill="url(#fade)"/>

<!-- time axis -->
<rect x="2" y="725" width="1323" height="18" fill="#22323c"/>
<rect x="2" y="743" width="1323" height="2" fill="#000"/>
<g fill="#3a4c56"><rect x="137" y="729" width="1" height="12"/><rect x="302" y="729" width="1" height="12"/><rect x="467" y="729" width="1" height="12"/><rect x="631" y="729" width="1" height="12"/><rect x="795" y="729" width="1" height="12"/><rect x="959" y="729" width="1" height="12"/><rect x="1123" y="729" width="1" height="12"/><rect x="1287" y="729" width="1" height="12"/></g>
<g class="m" fill="#c4ccd0"><text x="32" y="732">12:30</text><text x="196.500" y="732">12:45</text><text x="361" y="732">13:00</text><text x="525" y="732">13:15</text><text x="689" y="732">13:30</text><text x="853" y="732">13:45</text><text x="1017" y="732">14:00</text><text x="1181" y="732">14:15</text></g>
<g fill="#c4ccd0"><rect x="54.500" y="737" width="1.500" height="6"/><rect x="218.500" y="737" width="1.500" height="6"/><rect x="383.500" y="737" width="1.500" height="6"/><rect x="547.500" y="737" width="1.500" height="6"/><rect x="712" y="737" width="1.500" height="6"/><rect x="875.500" y="737" width="1.500" height="6"/><rect x="1039.500" y="737" width="1.500" height="6"/><rect x="1203.500" y="737" width="1.500" height="6"/></g>

<!-- CVD panel -->
<rect x="2" y="745" width="1323" height="252" fill="#37464f"/>
<g fill="#668295"><rect x="2" y="756" width="1323" height="1"/><rect x="2" y="776" width="1323" height="1"/><rect x="2" y="796" width="1323" height="1"/><rect x="2" y="816" width="1323" height="1"/><rect x="2" y="836" width="1323" height="1"/><rect x="2" y="856" width="1323" height="1"/><rect x="2" y="876" width="1323" height="1"/><rect x="2" y="896" width="1323" height="1"/><rect x="2" y="916" width="1323" height="1"/><rect x="2" y="936" width="1323" height="1"/><rect x="2" y="956" width="1323" height="1"/><rect x="1003" y="976" width="322" height="1"/></g>
<g stroke="#a9b0b4" stroke-width="2.200" stroke-dasharray="3.300 3.400" fill="none"><path d="M55 748V992M219 748V992M384 748V992M548 748V992M712.500 748V992M876 748V992M1040 748V992M1204 748V992"/></g>
<rect x="2" y="974.500" width="1001" height="3" fill="#3a0a3f"/>
<path d="M1006 976H1310" stroke="#3a0a3f" stroke-width="3" stroke-dasharray="16 16" fill="none"/>
<path d="M1006 932.300H1310" stroke="#e94f3d" stroke-width="3" stroke-dasharray="16 16" fill="none"/>
<g transform="translate(0 640) scale(.42088 .33333)"><path class="ns" stroke="#e94f3d" stroke-width="2.800" stroke-linejoin="round" d="M5 430L20 432 40 432 65 430 70 420 85 412 100 412 103 510 105 548 122 542 125 603 135 590 180 588 185 608 190 592 235 582 245 530 255 515 272 515 280 525 310 522 335 518 345 533 358 545 365 570 372 605 395 605 410 597 430 590 435 600 465 592 470 638 495 618 500 598 515 615 530 612 545 630 560 625 565 612 612 608 625 655 640 665 665 675 690 682 695 697 712 706 785 706 790 694 810 694 815 708 822 680 830 680 840 700 905 703 918 692 920 660 1020 660 1030 640 1045 645 1090 640 1115 660 1118 575 1140 575 1148 552 1155 600 1190 605 1215 595 1245 595 1252 655 1270 658 1278 620 1288 612 1291 545 1293 590 1310 605 1325 607 1330 575 1358 575 1368 603 1393 603 1400 635 1410 645 1420 617 1428 620 1438 685 1465 688 1472 718 1500 708 1520 695 1540 700 1560 700 1568 712"/></g>
<g transform="translate(660 640) scale(.43367 .33333)"><path class="ns" stroke="#e94f3d" stroke-width="2.800" stroke-linejoin="round" d="M0 705L15 705 22 685 35 685 42 715 70 720 75 715 130 715 135 720 165 718 175 745 192 795 230 805 250 822 295 825 318 832 325 853 350 853 352 800 357 845 400 840 405 825 450 825 470 850 495 875 520 878 540 877 605 877 610 882 650 885 675 895 720 887 755 895 763 877 790 877"/></g>
<rect x="1306" y="745" width="19" height="252" fill="url(#fade)"/>
<rect x="401" y="745" width="1" height="252" fill="#fff"/><rect x="1101" y="745" width="1" height="252" fill="#fff"/>
<rect x="1003" y="137" width="1" height="860" fill="#e8e8e8"/>
<g class="m" fill="#2c0a3a"><text x="408" y="846">0.00000002</text><text x="408" y="986">0.00000000</text></g>
<g class="m" fill="#2fc476"><text x="1107" y="826">-3000</text><text x="1107" y="906">-3500</text><text x="1107" y="986">-4000</text></g>

<!-- price scale -->
<rect x="1325" y="137" width="78" height="588" fill="#37464f"/>
<rect x="1325" y="137" width="1" height="588" fill="#2b3a43"/>
<rect x="1403" y="137" width="1" height="588" fill="#2f3f48"/>
<g clip-path="url(#psc)">
<g class="m p" transform="translate(0 1.500)">
<text x="1333" y="163">3985.00</text><text x="1333" y="191.500">3980.00</text><text x="1333" y="220">3975.00</text><text x="1333" y="248">3970.00</text><text x="1333" y="276">3965.00</text><text x="1333" y="303.500">3960.00</text><text x="1333" y="332">3955.00</text><text x="1333" y="360">3950.00</text><text x="1333" y="388">3945.00</text><text x="1333" y="417">3940.00</text><text x="1333" y="473">3930.00</text><text x="1333" y="501">3925.00</text><text x="1333" y="529">3920.00</text><text x="1333" y="557">3915.00</text><text x="1333" y="585">3910.00</text><text x="1333" y="613">3905.00</text><text x="1333" y="641">3900.00</text><text x="1333" y="669">3895.00</text><text x="1333" y="697">3890.00</text><text x="1333" y="725">3885.00</text>
</g>
<rect x="1326" y="428" width="76.500" height="18" fill="#37464f" stroke="#2fc476" stroke-width="2"/>
<text class="m p" x="1332" y="437.500">3936.25</text>

<!-- right columns -->
<rect x="1654" y="137" width="262" height="588" fill="#37464f"/>
<rect x="1654" y="137" width="60" height="588" fill="#a23428"/>
<g fill="#4f6672"><rect x="1714" y="137" width="1" height="588"/><rect x="1781" y="137" width="1" height="588"/><rect x="1847" y="137" width="1" height="588"/></g>
<rect x="1714" y="436" width="202" height="2" fill="#4a5f6b"/>
<rect x="1654" y="436" width="60" height="2" fill="#e94f3d"/>
<g transform="translate(1320 110) scale(.38265 .33333)">
<g id="ap"><path fill="#e94f3d" d="M1032 118L1040 145 1045 200 1060 235 1040 290 1055 345 1128 362 1050 380 1040 410 1060 465 1085 495 1060 520 1040 545 1045 590 1070 630 1045 680 1060 725 1142 748 1060 770 1040 790 1032 800ZM1032 860L1055 900H1032Z"/></g>
<use href="#ap" x="-159"/>
<path fill="#e94f3d" d="M1207 732L1215 760 1240 810 1260 860 1262 900H1207Z"/>
<path fill="#2ecc71" d="M1210 735L1240 790 1285 830 1310 850 1338 860 1320 880 1262 890 1262 900 1260 860 1240 810Z"/>
<path fill="#e94f3d" d="M1378 570L1388 620 1392 720 1400 790 1440 860 1447 900H1378Z"/>
<path fill="#2ecc71" d="M1378 570L1415 630 1420 660 1410 710 1430 760 1460 800 1510 850 1515 865 1490 885 1450 895 1447 900 1440 860 1400 790 1392 720 1388 620Z"/>
</g>
<g transform="translate(1320 410) scale(.38265 .33333)">
<path fill="#e94f3d" d="M1032 0V20L1108 17 1032 14Z"/><path fill="#e94f3d" d="M873 0V20L943 17 873 14Z"/>
<path fill="#2ecc71" d="M1032 108L1105 110 1075 150 1050 170 1075 205 1045 235 1035 265 1040 315 1068 340 1040 370 1050 400 1072 430 1040 460 1045 520 1040 570 1070 605 1040 640 1070 670 1158 690 1050 720 1040 760 1032 800 1052 830 1032 865ZM1032 918L1045 945H1032Z"/>
<path fill="#e94f3d" d="M1207 0H1235L1225 60 1222 130 1207 170Z"/>
<path fill="#2ecc71" d="M1235 0L1250 30 1235 50 1225 130 1207 170 1222 130 1225 60Z"/>
<path fill="#e94f3d" d="M1378 0H1430L1425 50 1445 120 1400 170 1385 220 1378 275Z"/>
<path fill="#2ecc71" d="M1430 0V40L1475 70 1490 100 1510 120 1445 150 1400 190 1385 240 1378 275 1385 220 1400 170 1445 120 1425 50Z"/>
</g>
<rect x="1782" y="406" width="134" height="2.500" fill="#f2f2f2"/>
<g class="m w" transform="translate(0 1.500)">
<text x="1657" y="163">30</text><text x="1657" y="192">50</text><text x="1657" y="220">200</text><text x="1657" y="248">25</text><text x="1657" y="276">100</text><text x="1657" y="303.500">30</text><text x="1657" y="332">49</text><text x="1657" y="360">125</text><text x="1657" y="417">30</text><text x="1657" y="445">30</text>
<text x="1718" y="163">30</text><text x="1718" y="192">50</text><text x="1718" y="220">200</text><text x="1718" y="248">25</text><text x="1718" y="276">100</text><text x="1718" y="303.500">30</text><text x="1718" y="332">49</text><text x="1718" y="360">125</text><text x="1718" y="417">30</text><text x="1718" y="445">30</text><text x="1718" y="473">50</text><text x="1718" y="501">35</text><text x="1718" y="529">50</text><text x="1718" y="556">49</text><text x="1718" y="585">50</text><text x="1718" y="613">45</text><text x="1718" y="641">256</text><text x="1718" y="669">25</text><text x="1718" y="697">45</text><text x="1718" y="725">30</text>
<text x="1785" y="360">2710</text><text x="1785" y="388">6247</text><text x="1785" y="417">4342</text><text x="1785" y="445">2041</text><text x="1785" y="473">755</text>
<text x="1850" y="303.500">3032</text><text x="1850" y="332">5158</text><text x="1850" y="360">5939</text><text x="1850" y="388">14630</text><text x="1850" y="417">11487</text><text x="1850" y="445">13729</text><text x="1850" y="473">10735</text><text x="1850" y="501">1448</text>
</g>
</g>

<!-- T&S panel -->
<rect x="1404" y="137" width="250" height="588" fill="#37464f"/>
<rect x="1410" y="143" width="101" height="22" rx="2" fill="#2e3c45" stroke="#0aa6f5" stroke-width="2"/>
<path d="M1454 151 1460 157 1466 151" fill="none" stroke="#fff" stroke-width="2"/>
<rect x="1522" y="142" width="55" height="24" fill="#4f6672"/><rect x="1587" y="142" width="60" height="24" fill="#4f6672"/>
<g class="ic"><path d="M1556 153V163H1541V148H1548M1547 156Q1548 150 1553 149V145L1559.500 150 1553 155V152Q1549 152 1547 156Z"/><g transform="translate(1617 154) rotate(42)"><rect x="-3.500" y="-11" width="7" height="12" rx="3.500"/><rect x="-3.500" y="-1" width="7" height="12" rx="3.500"/></g></g>
<rect x="1409" y="178" width="18" height="18" fill="#0aa6f5"/><path d="M1413 187 1417 191 1423 183" fill="none" stroke="#fff" stroke-width="2"/>
<rect x="1410" y="208" width="16" height="16" fill="none" stroke="#c5cfd4" stroke-width="2"/>
<rect x="1410" y="237" width="16" height="16" fill="none" stroke="#c5cfd4" stroke-width="2"/>
<text class="lb" x="1431" y="187">Min size:</text><text class="lb" x="1431" y="216">Max size:</text><text class="lb" x="1431" y="244">Show individual trade events</text>
<rect x="1523" y="173" width="123" height="27" fill="#36454e" stroke="#4f6672" stroke-width="2"/>
<rect x="1523" y="204" width="123" height="27" fill="#36454e" stroke="#44585f" stroke-width="2"/>
<text class="lb" x="1529" y="186" style="fill:#fff">20</text><text x="1529" y="217" font-size="14" fill="#5d7480">100</text>
<text class="lb" x="1409" y="270">Show:</text>
<g fill="none" stroke="#c5cfd4" stroke-width="2"><circle cx="1470" cy="271.500" r="8.500"/><circle cx="1533" cy="271.500" r="8.500"/><circle cx="1598" cy="271.500" r="8.500"/></g><circle cx="1470" cy="271.500" r="4" fill="#0aa6f5"/>
<text class="lb" x="1484" y="271.500">ALL</text><text class="lb" x="1547" y="271.500">BUY</text><text class="lb" x="1611" y="271.500">SELL</text>
<g fill="#4f6672"><rect x="1408" y="290" width="102" height="25"/><rect x="1512" y="290" width="67" height="25"/><rect x="1581" y="290" width="52" height="25"/><rect x="1635" y="290" width="14" height="25"/></g>
<text class="lb" x="1412" y="301.500">Time</text><text class="lb" x="1516" y="301.500">Price</text><text class="lb" x="1585" y="301.500">Size</text>
<g fill="#3b4c55"><rect x="1407" y="345" width="227" height="30"/><rect x="1407" y="405" width="227" height="30"/><rect x="1407" y="465" width="227" height="30"/><rect x="1407" y="525" width="227" height="30"/><rect x="1407" y="585" width="227" height="30"/><rect x="1407" y="645" width="227" height="30"/><rect x="1407" y="705" width="227" height="20"/></g>
<rect x="1634" y="315" width="15" height="407" fill="#263138"/><rect x="1638" y="320" width="7" height="114" fill="#5d7c8c"/>
<g class="r">
<text x="1418" y="330">13:56:11:909</text><text x="1521.500" y="330">3937....</text><text x="1590.500" y="330">100</text>
<text x="1418" y="360">13:56:02:596</text><text x="1521.500" y="360">3936....</text><text x="1590.500" y="360">22</text>
<text x="1418" y="390">13:55:57:335</text><text x="1521.500" y="390">3936....</text><text x="1590.500" y="390">20</text>
<text x="1418" y="420">13:55:51:853</text><text x="1521.500" y="420">3937....</text><text x="1590.500" y="420">20</text>
<text x="1418" y="450">13:55:47:876</text><text x="1521.500" y="450">3937....</text><text x="1590.500" y="450">21</text>
<text x="1418" y="480">13:55:42:248</text><text x="1521.500" y="480">3937....</text><text x="1590.500" y="480">22</text>
<text x="1418" y="510">13:55:27:475</text><text x="1521.500" y="510">3938....</text><text x="1590.500" y="510">25</text>
<text x="1418" y="540">13:55:24:484</text><text x="1521.500" y="540">3938....</text><text x="1590.500" y="540">21</text>
<text x="1418" y="600">13:55:19:535</text><text x="1521.500" y="600">3937....</text><text x="1590.500" y="600">27</text>
<text x="1418" y="630">13:55:10:622</text><text x="1521.500" y="630">3938....</text><text x="1590.500" y="630">21</text>
<text x="1418" y="660">13:55:03:700</text><text x="1521.500" y="660">3938....</text><text x="1590.500" y="660">33</text>
<text x="1418" y="720">13:54:33:501</text><text x="1521.500" y="720">3938....</text><text x="1590.500" y="720">22</text>
</g>
<g class="g">
<text x="1418" y="570">13:55:20:455</text><text x="1521.500" y="570">3938....</text><text x="1590.500" y="570">51</text>
<text x="1418" y="690">13:54:37:037</text><text x="1521.500" y="690">3938....</text><text x="1590.500" y="690">25</text>
</g>

<!-- lower right -->
<rect x="1325" y="725" width="595" height="19" fill="#24323b"/>
<path d="M1333 731 1339 737 1345 731" fill="none" stroke="#d5dde1" stroke-width="2"/>
<rect x="1325" y="744" width="595" height="253" fill="#37464f"/>
<rect x="1325" y="744" width="1" height="253" fill="#2b3a43"/>
<g fill="none" stroke="#dfe5e8" stroke-width="1"><circle cx="1341" cy="759" r="3.500"/><circle cx="1341" cy="759" r="7.500"/></g>
<circle cx="1341" cy="759" r="9" fill="none" stroke="#dfe5e8" stroke-width="1.800" stroke-dasharray="3.500 3.570"/>

<g transform="translate(1370.500 798.500)"><path class="gt" d="M-24.750 24.750A35 35 0 1 1 24.750 24.750"/><text class="gl" y="-9.500" fill="#fff">Breakeven</text></g>
<g transform="translate(1454.300 798.500)"><path class="gt" d="M-24.750 24.750A35 35 0 1 1 24.750 24.750"/><path class="ga" stroke="#f80c0c" d="M0-35A35 35 0 0 1 17.500-30.300"/><text class="gl" y="-9.500" fill="#f80c0c">Liquidity Ask</text><text class="gv" y="9.500">60.0</text></g>
<g transform="translate(1538 798.500)"><path class="gt" d="M-24.750 24.750A35 35 0 1 1 24.750 24.750"/><path class="ga" stroke="#0bf00b" d="M0-35A35 35 0 0 1 30.900-16.400"/><text class="gl" y="-9.500" fill="#0bf00b">Liquidity Bid</text><text class="gv" y="9.500">130.0</text></g>
<g transform="translate(1622 798.500)"><path class="gt" d="M-24.750 24.750A35 35 0 1 1 24.750 24.750"/><path class="ga" stroke="#ffc400" d="M0-35A35 35 0 0 1 34.500 6.100"/><svg x="-34" y="-20" width="67" height="20"><text class="gl" x="0" y="10.500" fill="#ffc400" style="text-anchor:start">Quotes Delta</text></svg><text class="gv" y="9.500">1130.0</text></g>
<g transform="translate(1706.500 798.500)"><path class="gt" d="M-24.750 24.750A35 35 0 1 1 24.750 24.750"/><path class="ga" stroke="#0bf00b" d="M0-35A35 35 0 0 1 22.500-26.800"/><text class="gl" y="-9.500" fill="#0bf00b">Volume Buy</text><text class="gv" y="9.500">654.32</text></g>
<g transform="translate(1790.700 798.500)"><path class="gt" d="M-24.750 24.750A35 35 0 1 1 24.750 24.750"/><path class="ga" stroke="#f80c0c" d="M0-35A35 35 0 0 1 34.200-7.300"/><text class="gl" y="-9.500" fill="#f80c0c">Volume Sell</text><text class="gv" y="9.500">861.42</text></g>
<g transform="translate(1874.500 798.500)"><path class="gt" d="M-24.750 24.750A35 35 0 1 1 24.750 24.750"/><path class="ga" stroke="#e94f3d" d="M0-35A35 35 0 0 0-26.800 22.500"/><text class="gl" y="-9.500" fill="#e94f3d">CVD</text><text class="gv" y="9.500">-3728</text></g>

<g transform="translate(1411 906)"><path class="gt" d="M-24.750 24.750A35 35 0 1 1 24.750 24.750"/><path class="ga" stroke="#d9531e" d="M0-35A35 35 0 0 0-24.750 24.750"/><text class="gl" y="-9.500" fill="#d9531e">CVDsym</text><text class="gv" y="9.500">-3999</text></g>
<g transform="translate(1495.300 906)"><path class="gt" d="M-24.750 24.750A35 35 0 1 1 24.750 24.750"/><path class="ga" stroke="#0bf00b" d="M0-35A35 35 0 0 1 26.800 22.500"/><text class="gl" y="-9.500" fill="#0bf00b">Ask</text><text class="gv" y="9.500">3939.75</text></g>
<g transform="translate(1579 906)"><path class="gt" d="M-24.750 24.750A35 35 0 1 1 24.750 24.750"/><path class="ga" stroke="#0bf00b" d="M1-35A35 35 0 0 1 9.060-33.800"/><text class="gl" y="-9.500" fill="#0bf00b">Ask size</text><text class="gv" y="9.500">20.0</text></g>
<g transform="translate(1663.300 906)"><path class="gt" d="M-24.750 24.750A35 35 0 1 1 24.750 24.750"/><path class="ga" stroke="#f80c0c" d="M0-35A35 35 0 0 1 26.800 22.500"/><text class="gl" y="-9.500" fill="#f80c0c">Bid</text><text class="gv" y="9.500">3934.5</text></g>
<g transform="translate(1747 906)"><path class="gt" d="M-24.750 24.750A35 35 0 1 1 24.750 24.750"/><path class="ga" stroke="#f80c0c" d="M1-35A35 35 0 0 1 9.060-33.800"/><text class="gl" y="-9.500" fill="#f80c0c">Bid size</text><text class="gv" y="9.500">20.0</text></g>
<g transform="translate(1831.700 906)"><path class="gt" d="M-24.750 24.750A35 35 0 1 1 24.750 24.750"/><text class="gl" y="-9.500" fill="#3a0a4a">HIRO Cumul...</text><text class="gv" y="9.500">0.0</text></g>

<!-- status -->
<rect y="997" width="1920" height="20" fill="#37464f"/>
<rect y="1015.500" width="1920" height="1.500" fill="#2b3a43"/>
<rect x="3" y="1000" width="13" height="14" rx="2" fill="#1464c8"/><text x="9.500" y="1007" text-anchor="middle" font-family="Liberation Serif,serif" font-style="italic" font-weight="bold" font-size="13" fill="#fff">i</text>
<rect x="1532" y="1011" width="2" height="3" fill="#fff"/>
<text x="1560" y="1007" font-size="12.500" fill="#eef2f4">BMD/IB/R+</text>
<text x="1740" y="1007" font-size="12.500" fill="#eef2f4">Data: Live</text>
<text x="1814.500" y="1007" font-size="12.500" fill="#eef2f4">Trading: Real</text>
<circle cx="1910" cy="1007" r="7" fill="#f80c0c"/>
</svg>
</body></html>
